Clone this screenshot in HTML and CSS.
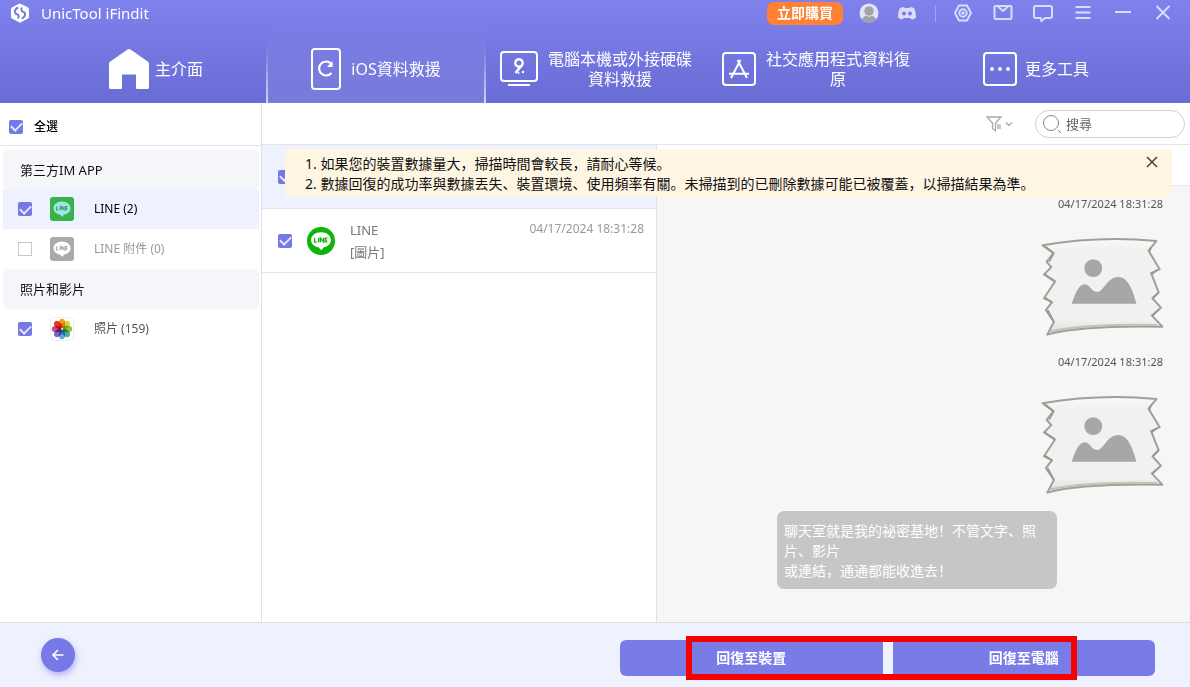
FILE: index.html
```html
<!DOCTYPE html>
<html lang="zh-CN">
<head>
<meta charset="utf-8">
<title>UnicTool iFindit</title>
<link rel="stylesheet" href="styles.css">
</head>
<body>
<svg class="defs" aria-hidden="true">
  <defs>
    <linearGradient id="paper" x1="0" y1="0" x2="0" y2="1">
      <stop offset="0" stop-color="#fafafa"/><stop offset=".12" stop-color="#f2f1f0"/><stop offset=".85" stop-color="#f2f1f0"/><stop offset=".96" stop-color="#e2e1dd"/>
    </linearGradient>
    <symbol id="photo" viewBox="33 276 375 297">
      <path d="M38 300Q210 270 382 287L358 316L392 372L366 384L389 442L370 460L396 489L368 512L400 546Q150 542 52 570L72 532L48 496L66 472L42 460L75 410L42 388L64 366L50 350L70 324Z" fill="url(#paper)" stroke="#a09f98" stroke-width="6" stroke-linejoin="round"/>
      <path d="M48 304L72 324L58 350M46 388L76 408M46 458L68 474M54 496L73 532M362 318L366 306M368 388L386 374M372 460L388 444M370 514L392 492" fill="none" stroke="#96958d" stroke-width="4"/>
      <path d="M62 560Q180 535 384 541" fill="none" stroke="#c3c1b8" stroke-width="6"/>
      <circle cx="191" cy="369" r="27" fill="#a8a7a8"/>
      <path d="M126 477C136 448 146 419 165 418C182 418 184 441 203 441C224 440 232 397 266 396C297 396 310 436 322 477Z" fill="#a8a7a8"/>
    </symbol>
    <symbol id="line" viewBox="0 0 24 24">
      <path d="M12 4.5C7 4.500 3.500 7.500 3.500 11.200C3.500 14.500 6.300 17 10 17.600L12.200 20L14.200 17.500C18 16.800 20.500 14.400 20.500 11.200C20.500 7.500 17 4.500 12 4.500Z" fill="var(--bubble)"/>
      <path d="M6.500 9.300V13H8.500M10 9.300V13M11.500 13V9.500L14 12.800V9.300M17.500 9.600H15.500V12.700H17.500M15.500 11.200H17.300" fill="none" stroke="var(--mark)" stroke-width="1.100"/>
    </symbol>
  </defs>
</svg>

<header class="header">
  <div class="titlebar">
    <svg class="logo" viewBox="0 0 20 20"><path d="M10 .5L18 4.500Q19 5 19 6V14Q19 15 18 15.500L11 19.300Q10 20 9 19.300L2 15.500Q1 15 1 14V6Q1 5 2 4.500L9 .8Z" fill="#fff"/><path d="M8.200 4.500Q4.500 6 5 9.500Q5.500 11 7.500 11.500Q9 12 8.300 15.500M11.800 15.500Q15.500 14 15 10.500Q14.500 9 12.500 8.500Q11 8 11.700 4.500" fill="none" stroke="#7577e2" stroke-width="2"/></svg>
    <h1 class="app-name">UnicTool iFindit</h1>
    <button class="buy">立即購買</button>
    <button class="tool avatar" aria-label="帳戶"><svg viewBox="0 0 20 20"><circle cx="10" cy="10" r="9.500" fill="#e3e3f4"/><path d="M3 16.500Q5 12 10 12T17 16.500Q14 19.500 10 19.500T3 16.500Z" fill="#a1a1a9"/><circle cx="10" cy="8" r="5.200" fill="#a1a1a9" stroke="#e3e3f4"/></svg></button>
    <button class="tool discord" aria-label="Discord"><svg viewBox="0 0 20 20"><path d="M7 4L7.500 5H12.500L13 4Q16 4.300 17.200 5.300Q19.300 9 19 14.500Q17 16.300 14.500 16.500L13.500 15H6.500L5.500 16.500Q3 16.300 1 14.500Q.7 9 2.800 5.300Q4 4.300 7 4Z" fill="#dcdcfa"/><ellipse cx="7" cy="10.500" rx="1.900" ry="2.100" fill="#787be5"/><ellipse cx="13" cy="10.500" rx="1.900" ry="2.100" fill="#787be5"/></svg></button>
    <span class="divider"></span>
    <div class="window-tools">
      <button class="tool" aria-label="設定"><svg viewBox="0 0 20 20"><path d="M6 2.500H14L18 10L14 17.500H6L2 10Z"/><circle cx="10" cy="10" r="3.700"/><circle cx="10" cy="10" r=".8"/></svg></button>
      <button class="tool" aria-label="郵件"><svg viewBox="0 0 20 20"><rect x="1.500" y="3" width="17" height="13" rx="1"/><path d="M5 3.500L10 8L15 3.500"/></svg></button>
      <button class="tool" aria-label="回饋"><svg viewBox="0 0 20 20"><path d="M3 3H17Q19 3 19 5V13Q19 15 17 15H12L8.500 18L7.500 15H3Q1 15 1 13V5Q1 3 3 3Z"/></svg></button>
      <button class="tool" aria-label="選單"><svg viewBox="0 0 20 20"><path d="M2.500 4H17.500M2.500 9.500H17.500M2.500 15H17.500"/></svg></button>
      <button class="tool" aria-label="最小化"><svg viewBox="0 0 20 20"><path d="M2 9H18"/></svg></button>
      <button class="tool" aria-label="關閉"><svg viewBox="0 0 20 20"><path d="M3.500 3L16.500 16M16.500 3L3.500 16"/></svg></button>
    </div>
  </div>
  <nav class="nav">
    <a class="nav-item tight" href="#home"><svg width="40" height="42" viewBox="0 0 40 42"><path d="M0 16Q0 14.500 1.300 13.600L18.500 1.500Q20 .5 21.500 1.500L38.700 13.600Q40 14.500 40 16V39.500Q40 41 38.500 41H28Q27 41 27 40V26.500H13V40Q13 41 12 41H1.500Q0 41 0 39.500Z" fill="#fff"/></svg><span>主介面</span></a>
    <a class="nav-item active wide" href="#ios"><svg width="30" height="42" viewBox="0 0 30 42"><rect x="1" y="1" width="28" height="40" rx="3"/><path d="M20.500 25A7 7 0 1 1 20 15.500L21 17" stroke-width="2.200"/><path d="M21.500 13V19H16Z" fill="#fff" stroke="none"/></svg><span>iOS資料救援</span></a>
    <a class="nav-item wide" href="#disk"><svg width="38" height="36" viewBox="0 0 38 36"><rect x="1" y="1" width="36" height="29" rx="3"/><path d="M8 34H30"/><circle cx="19" cy="12" r="3.700" stroke-width="2.400"/><path d="M21.500 14.500L15.500 22" stroke-width="2.600"/><circle cx="23" cy="21" r="1.200" fill="#fff" stroke="none"/><circle cx="18.500" cy="22" r="1" fill="#fff" stroke="none"/></svg><span>電腦本機或外接硬碟<br>資料救援</span></a>
    <a class="nav-item wide" href="#social"><svg width="34" height="34" viewBox="0 0 34 34"><rect x="1" y="1" width="32" height="32" rx="3"/><path d="M15.500 8L25 26M18.500 8L9 26M7 21.800H27"/></svg><span>社交應用程式資料復<br>原</span></a>
    <a class="nav-item" href="#more"><svg width="34" height="34" viewBox="0 0 34 34"><rect x="1" y="1" width="32" height="32" rx="3"/><g fill="#fff" stroke="none"><circle cx="9" cy="17" r="1.900"/><circle cx="17" cy="17" r="1.900"/><circle cx="25" cy="17" r="1.900"/></g></svg><span>更多工具</span></a>
  </nav>
</header>

<main class="main">
  <aside class="sidebar">
    <label class="select-all"><input class="check" type="checkbox" checked>全選</label>
    <div class="tree">
      <h2 class="group">第三方IM APP</h2>
      <label class="entry selected"><input class="check" type="checkbox" checked><svg class="app-icon line-green" viewBox="0 0 24 24"><rect width="24" height="24" rx="3"/><use href="#line"/></svg>LINE (2)</label>
      <label class="entry disabled"><input class="check" type="checkbox"><svg class="app-icon line-gray" viewBox="0 0 24 24"><rect width="24" height="24" rx="3"/><use href="#line"/></svg>LINE 附件 (0)</label>
      <h2 class="group">照片和影片</h2>
      <label class="entry"><input class="check" type="checkbox" checked><svg class="app-icon photos" viewBox="-12 -12 24 24"><rect x="-11.500" y="-11.500" width="23" height="23" rx="4" fill="#fff" stroke="#eeeef2"/>
        <g class="petals">
          <ellipse cy="-5.500" rx="3.200" ry="4.700" fill="#f39a1e"/>
          <ellipse cy="-5.500" rx="3.200" ry="4.700" fill="#e3cf2c" transform="rotate(45)"/>
          <ellipse cy="-5.500" rx="3.200" ry="4.700" fill="#8fc24a" transform="rotate(90)"/>
          <ellipse cy="-5.500" rx="3.200" ry="4.700" fill="#4aae94" transform="rotate(135)"/>
          <ellipse cy="-5.500" rx="3.200" ry="4.700" fill="#5fa5e2" transform="rotate(180)"/>
          <ellipse cy="-5.500" rx="3.200" ry="4.700" fill="#7d67bd" transform="rotate(225)"/>
          <ellipse cy="-5.500" rx="3.200" ry="4.700" fill="#c54b94" transform="rotate(270)"/>
          <ellipse cy="-5.500" rx="3.200" ry="4.700" fill="#ee3525" transform="rotate(315)"/>
        </g></svg>照片 (159)</label>
    </div>
  </aside>

  <section class="content">
    <div class="toolbar">
      <button class="filter" aria-label="篩選"><svg width="28" height="16" viewBox="0 0 28 16"><path d="M1 1H15L9.500 7V15L6.500 12.500V7ZM12 8V13M14 8.500V13M20 6.500L23 9.500L26 6.500"/></svg></button>
      <label class="search"><svg width="20" height="20" viewBox="0 0 20 20"><circle cx="8" cy="9" r="7.500"/><path d="M15 16L18 19"/></svg><input type="search" placeholder="搜尋" aria-label="搜尋"></label>
    </div>
    <div class="panes">
      <div class="threads">
        <div class="thread current"><input class="check" type="checkbox" checked aria-label="對話"></div>
        <div class="thread">
          <input class="check" type="checkbox" checked aria-label="LINE">
          <svg class="face" viewBox="0 0 24 24"><circle cx="12" cy="12" r="12"/><use href="#line"/></svg>
          <div class="thread-text"><span>LINE</span><span>[圖片]</span></div>
          <time>04/17/2024 18:31:28</time>
        </div>
      </div>
      <div class="chat">
        <div class="chat-head"></div>
        <div class="messages">
          <time>04/17/2024 18:31:28</time>
          <svg class="picture" role="img" aria-label="圖片"><use href="#photo"/></svg>
          <time>04/17/2024 18:31:28</time>
          <svg class="picture" role="img" aria-label="圖片"><use href="#photo"/></svg>
          <p class="notice">聊天室就是我的祕密基地！不管文字、照<br>片、影片<br>或連結，通通都能收進去！</p>
        </div>
      </div>
    </div>
    <div class="banner">
      <p>1. 如果您的裝置數據量大，掃描時間會較長，請耐心等候。<br>2. 數據回復的成功率與數據丟失、裝置環境、使用頻率有關。未掃描到的已刪除數據可能已被覆蓋，以掃描結果為準。</p>
      <button class="dismiss" aria-label="關閉提示"><svg width="12" height="12" viewBox="0 0 12 12"><path d="M1 1L11 11M11 1L1 11"/></svg></button>
    </div>
  </section>
</main>

<footer class="footer">
  <button class="back" aria-label="返回"><svg width="12" height="12" viewBox="0 0 12 12"><path d="M11.500 6H1M6 1L1 6L6 11"/></svg></button>
  <div class="actions">
    <button class="action">回復至裝置</button>
    <button class="action">回復至電腦</button>
    <span class="highlight"></span>
  </div>
</footer>
</body>
</html>
```
FILE: styles.css
```css
* { box-sizing: border-box; }
body {
  margin: 0;
  height: 100vh;
  display: flex;
  flex-direction: column;
  font: 12px/20px "Noto Sans", "Noto Sans CJK SC", "Noto Sans CJK TC", sans-serif;
  color: #222;
  background: #fff;
}
button { margin: 0; padding: 0; border: 0; background: none; font: inherit; color: inherit; cursor: pointer; }
h1, h2, p { margin: 0; font-weight: 400; }
svg { display: block; flex: none; }
.defs { position: absolute; width: 0; height: 0; }

.header { background: linear-gradient(#7f82ed, #6a6cd5); color: #fff; }
.titlebar { display: flex; align-items: center; height: 26px; padding: 0 17px 0 10px; }
.logo { width: 20px; height: 20px; }
.app-name { margin-left: 11px; margin-right: auto; font-size: 15px; }
.buy { width: 76px; height: 23px; border-radius: 7px; background: #ff8133; font-size: 14px; font-weight: 700; }
.tool { width: 20px; height: 20px; }
.tool svg { width: 20px; height: 20px; }
.avatar { margin-left: 16px; }
.discord { margin-left: 18px; }
.divider { width: 1px; height: 17px; margin: 0 17px 0 18px; background: #a3a4f3; }
.window-tools { display: flex; gap: 20px; fill: none; stroke: #dbdbfb; stroke-width: 2; }

.nav { display: grid; grid-template-columns: repeat(5, 1fr); height: 77px; padding: 0 44px 0 46px; }
.nav-item { display: flex; align-items: center; justify-content: center; gap: 8px; padding-top: 8px; color: inherit; font-size: 16px; text-align: center; text-decoration: none; }
.nav-item svg { fill: none; stroke: #fff; stroke-width: 2; }
.nav-item.tight { gap: 6px; }
.nav-item.tight svg { stroke: none; }
.nav-item.wide { gap: 10px; }
.nav-item.active {
  background:
    linear-gradient(transparent 30%, #d8d4fa) left / 2px 100% no-repeat,
    linear-gradient(transparent 30%, #d8d4fa) right / 2px 100% no-repeat,
    linear-gradient(transparent, rgba(255, 255, 255, .1));
}

.main { flex: 1; min-height: 0; display: flex; }
.sidebar { width: 262px; border-right: 1px solid #e1e1e4; }
.select-all { display: flex; align-items: center; gap: 11px; height: 43px; padding: 5px 9px 0; border-bottom: 1px solid #e4e4e6; font-weight: 500; color: #000; }
.check { appearance: none; flex: none; display: grid; place-items: center; width: 14px; height: 14px; margin: 0; border: 1px solid #c8c8cc; background: #fff; }
.check:checked { border: 0; border-radius: 2px; background: #7579e6; }
.check:checked::after { content: ""; width: 9px; height: 5px; border: solid #e6e6fc; border-width: 0 0 2px 2px; transform: translateY(-1px) rotate(-45deg); }
.tree { padding: 4px 2px 0 3px; }
.group { height: 39px; padding: 0 17px; border-radius: 5px; background: #f5f6fa; font-size: 13px; line-height: 40px; color: #111; }
.entry { display: flex; align-items: center; height: 40px; padding: 0 15px; color: #555; }
.entry + .group { height: 40px; }
.entry.selected { background: #eef2fe; color: #000; }
.entry.disabled { color: #999; }
.app-icon { width: 24px; height: 24px; margin: 0 20px 0 18px; }
.line-green { fill: #36b449; --bubble: #a5e4e5; --mark: #36a26a; }
.line-gray { fill: #aaa; --bubble: #fff; --mark: #aaa; }
.petals ellipse { mix-blend-mode: multiply; }

.content { position: relative; flex: 1; min-width: 0; display: flex; flex-direction: column; }
.toolbar { display: flex; align-items: center; justify-content: flex-end; gap: 21px; height: 42px; padding: 0 5px 0 0; border-bottom: 1px solid #e4e4e6; }
.filter svg { fill: none; stroke: #aaa; stroke-width: 1.300; }
.search { display: flex; align-items: center; gap: 3px; width: 150px; height: 28px; padding: 0 7px; border: 1px solid #d0d0d0; border-radius: 14px; }
.search svg { fill: none; stroke: #888; }
.search input { width: 100%; min-width: 0; padding: 0; border: 0; outline: 0; background: none; font: inherit; font-size: 13px; }
.search input::placeholder { color: #666; }
.panes { flex: 1; min-height: 0; display: flex; }
.threads { width: 395px; border-right: 1px solid #e1e1e4; }
.thread { display: flex; align-items: center; gap: 15px; height: 64px; padding: 0 12px 0 16px; border-bottom: 1px solid #e6e6e8; color: #666; }
.thread.current { background: #eef2fe; }
.face { width: 28px; height: 28px; fill: #0db509; --bubble: #fff; --mark: #0db509; }
.thread-text { display: flex; flex-direction: column; gap: 2px; margin-right: auto; font-size: 13px; color: #777; }
.thread > time { align-self: flex-start; margin-top: 10px; color: #999; }
.chat { flex: 1; min-width: 0; background: #f6f6f7; }
.chat-head { height: 41px; background: #fff; border-bottom: 1px solid #e6e6e8; }
.messages { display: flex; flex-direction: column; align-items: flex-end; padding: 8px 25px 0 12px; font-size: 11px; color: #555; }
.messages time { margin-right: 2px; }
.picture { width: 124px; height: 99px; margin: 23px 0 16px; }
.notice { align-self: center; width: 280px; margin-top: 1px; padding: 10px 7px 8px; border-radius: 7px; background: #c6c6c6; font-size: 14px; color: #fff; }

.banner { position: absolute; top: 46px; left: 23px; right: 18px; display: flex; justify-content: space-between; align-items: flex-start; padding: 5px 14px 3px 20px; border-radius: 4px; background: #fff5e3; font-size: 14px; color: #111; }
.dismiss { padding: 2px 0; }
.dismiss svg { fill: none; stroke: #444; stroke-width: 1.500; }

.footer { display: flex; align-items: center; justify-content: space-between; height: 65px; padding: 0 35px 0 41px; border-top: 1px solid #dedee2; background: #eef2fe; }
.back { display: grid; place-items: center; width: 34px; height: 34px; border-radius: 50%; background: #777ae6; box-shadow: 1px 3px 6px rgba(119, 110, 240, .5); }
.back svg { fill: none; stroke: #fff; stroke-width: 1.600; }
.actions { position: relative; display: flex; gap: 10px; width: 535px; margin-top: 6px; }
.action { flex: 1; height: 36px; border-radius: 6px 0 0 6px; background: #797ce6; color: #fff; font-size: 14px; font-weight: 700; }
.action + .action { border-radius: 0 6px 6px 0; }
.highlight { position: absolute; inset: -4px 78px -4px 66px; border: 6px solid #f60000; pointer-events: none; }
```
